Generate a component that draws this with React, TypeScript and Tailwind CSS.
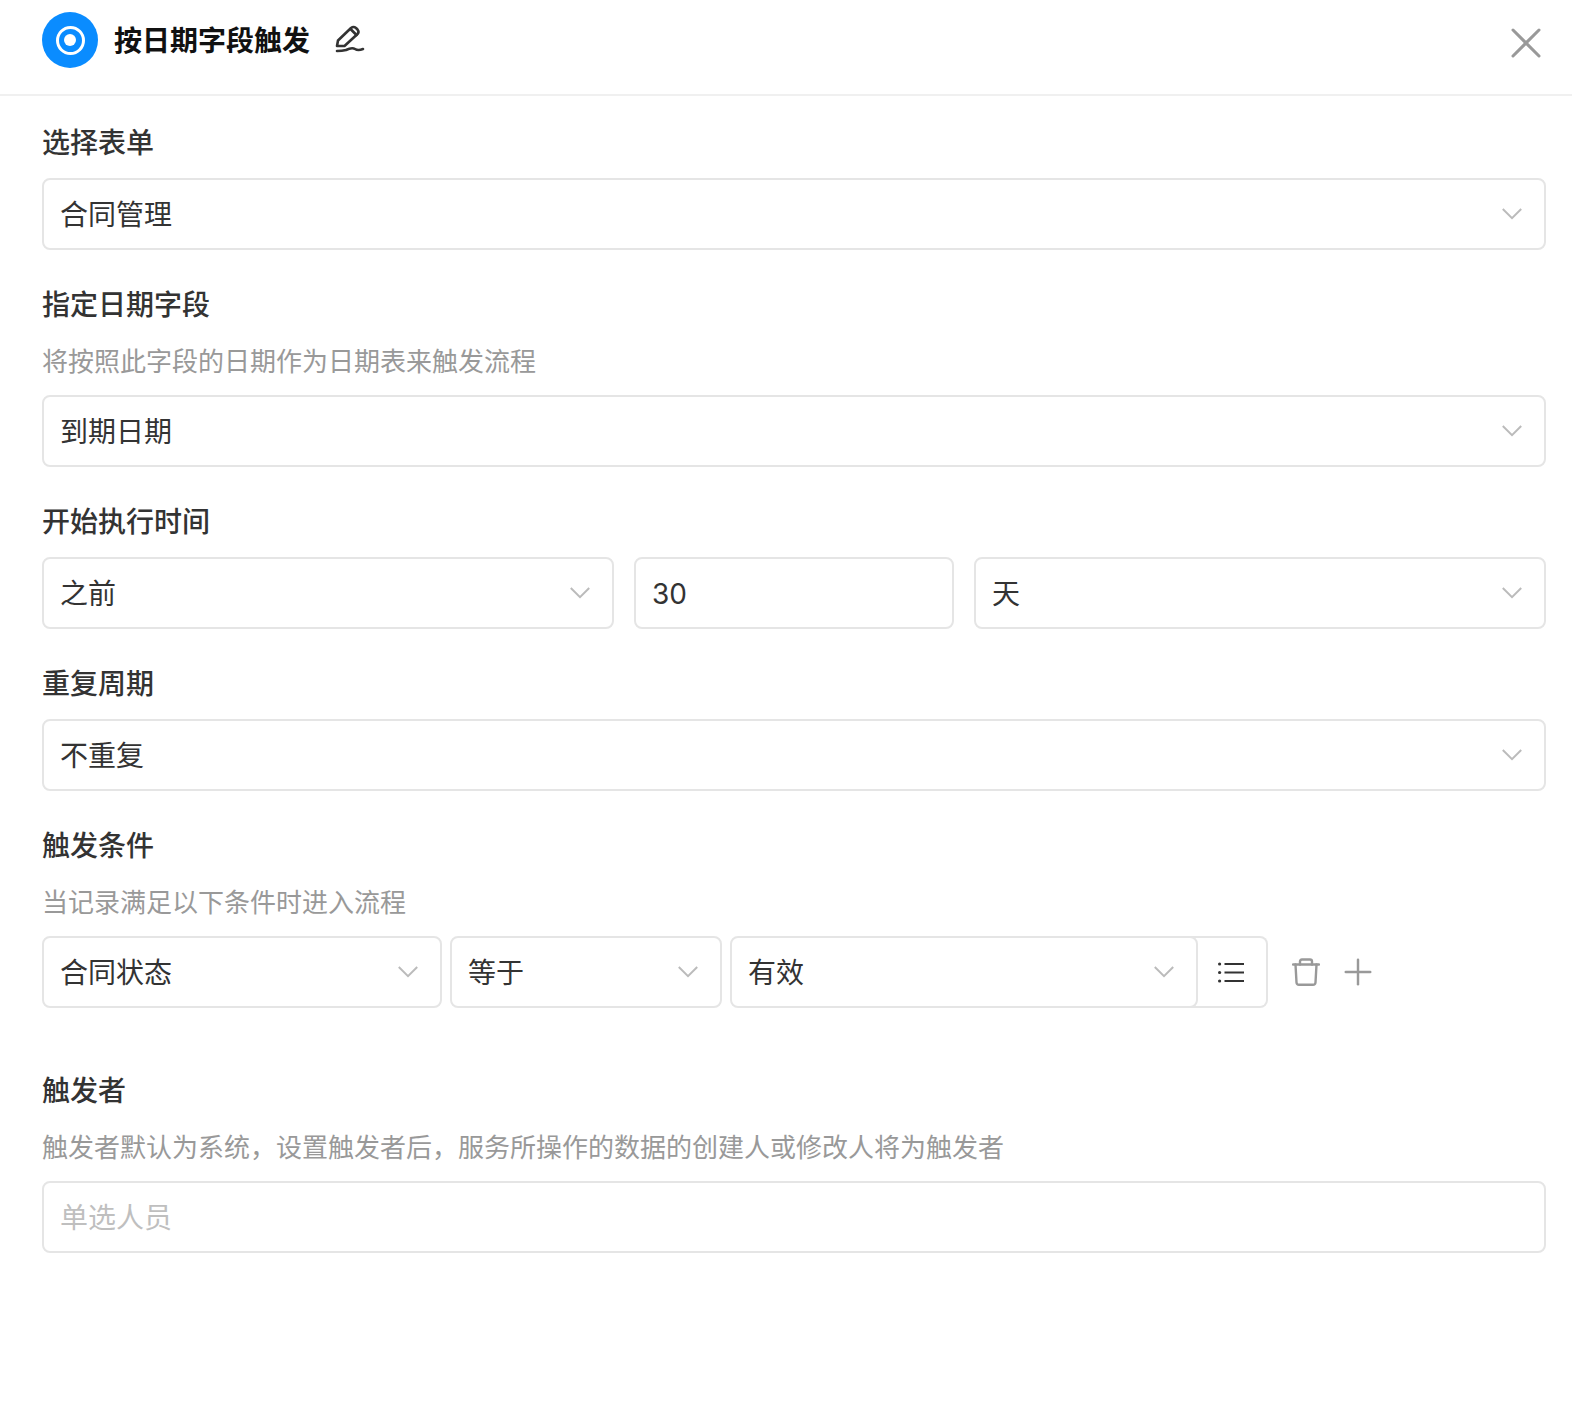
import { Plus, X } from 'lucide-react'

const font = "font-['Inter','Noto_Sans_CJK_SC',sans-serif]"

function Label({ text }: { text: string }) {
  return <div className="h-10 pt-px text-[28px] leading-10 font-medium text-[#333333]">{text}</div>
}

function Hint({ text }: { text: string }) {
  return <div className="mt-[19px] h-9 pt-px text-[26px] leading-9 text-[#999999]">{text}</div>
}

function Chevron() {
  return (
    <svg className="h-[12px] w-[20px] text-[#bbbbbb]" viewBox="0 0 20 12" fill="none" stroke="currentColor" strokeWidth="2">
      <path d="M0.8 1 L10 10.2 L19.2 1" />
    </svg>
  )
}

function Select({ value, className = '' }: { value: string; className?: string }) {
  return (
    <div className={`flex h-[72px] items-center justify-between rounded-lg border-2 border-[#e5e5e5] bg-white pl-[16px] pr-[22px] ${className}`}>
      <span className="mt-[2px] text-[28px] text-[#333333]">{value}</span>
      <Chevron />
    </div>
  )
}

export default function App() {
  return (
    <div className={`h-[1410px] w-[1572px] bg-white ${font}`}>
      <header className="flex h-[96px] items-center border-b-2 border-[#f0f0f0] pb-[14px] pl-[42px] pr-[20px]">
        <div className="flex h-14 w-14 items-center justify-center rounded-full bg-[#0a8cff]">
          <div className="flex h-[29px] w-[29px] items-center justify-center rounded-full border-[3px] border-white">
            <div className="h-3 w-3 rounded-full bg-white" />
          </div>
        </div>
        <h1 className="ml-4 mt-[2px] text-[28px] font-semibold text-[#111111]">按日期字段触发</h1>
        <svg className="ml-[24px] h-8 w-8" viewBox="0 0 32 32" fill="none" stroke="#333333" strokeWidth="2.6" strokeLinecap="round" strokeLinejoin="round">
          <path d="M3 22 L4 16.5 L17 4 Q19.5 2 22 4 L23.5 5.5 Q25.5 8 23.5 10 L10.5 22 Z" />
          <path d="M16.5 5 L22.5 11" />
          <path d="M3 27 Q8 27 12 26 Q18 23 21 25 Q24 27 29 25" />
        </svg>
        <X className="ml-auto mt-[6px] h-[52px] w-[52px] text-[#999999]" strokeWidth={1.4} />
      </header>

      <main className="pl-[42px] pr-[26px] pt-[26px]">
        <Label text="选择表单" />
        <Select value="合同管理" className="mt-4" />

        <div className="mt-[34px]">
          <Label text="指定日期字段" />
          <Hint text="将按照此字段的日期作为日期表来触发流程" />
          <Select value="到期日期" className="mt-4" />
        </div>

        <div className="mt-[34px]">
          <Label text="开始执行时间" />
          <div className="mt-4 flex gap-[20px]">
            <Select value="之前" className="w-[572px]" />
            <div className="flex h-[72px] w-[320px] items-center rounded-lg border-2 border-[#e5e5e5] pl-[16px] text-[28px] text-[#333333]">
              <span className="mt-[2px]">30</span>
            </div>
            <Select value="天" className="flex-1" />
          </div>
        </div>

        <div className="mt-[34px]">
          <Label text="重复周期" />
          <Select value="不重复" className="mt-4" />
        </div>

        <div className="mt-[34px]">
          <Label text="触发条件" />
          <Hint text="当记录满足以下条件时进入流程" />
          <div className="mt-4 flex items-center">
            <Select value="合同状态" className="w-[400px]" />
            <Select value="等于" className="ml-2 w-[272px]" />
            <Select value="有效" className="relative z-10 ml-2 w-[468px]" />
            <div className="-ml-2 flex h-[72px] w-[78px] items-center rounded-r-lg border-2 border-l-0 border-[#e5e5e5] pl-[28px]">
              <svg className="h-[21px] w-[26px]" viewBox="0 0 26 21" fill="none" stroke="#333333" strokeWidth="2">
                <path d="M6.5 2h19.5M6.5 10.5h19.5M6.5 19h19.5" />
                <circle cx="1.6" cy="2" r="1.6" fill="#333333" stroke="none" />
                <circle cx="1.6" cy="10.5" r="1.6" fill="#333333" stroke="none" />
                <circle cx="1.6" cy="19" r="1.6" fill="#333333" stroke="none" />
              </svg>
            </div>
            <svg className="ml-6 h-7 w-7" viewBox="0 0 28 28" fill="none" stroke="#999999" strokeWidth="2.4" strokeLinecap="round" strokeLinejoin="round">
              <path d="M1 6.5h26" />
              <path d="M8 6.5V3.5Q8 1.5 10 1.5h8Q20 1.5 20 3.5v3" />
              <path d="M3.5 6.5 L4.5 24.5 Q4.7 26.8 7 26.8 h14 Q23.3 26.8 23.5 24.5 L24.5 6.5" />
            </svg>
            <Plus className="ml-[17px] h-[42px] w-[42px] text-[#999999]" strokeWidth={1.4} />
          </div>
        </div>

        <div className="mt-[62px]">
          <Label text="触发者" />
          <Hint text="触发者默认为系统，设置触发者后，服务所操作的数据的创建人或修改人将为触发者" />
          <div className="mt-4 flex h-[72px] items-center rounded-lg border-2 border-[#e5e5e5] pl-[16px] text-[28px] text-[#bfbfbf]">
            <span className="mt-[2px]">单选人员</span>
          </div>
        </div>
      </main>
    </div>
  )
}
